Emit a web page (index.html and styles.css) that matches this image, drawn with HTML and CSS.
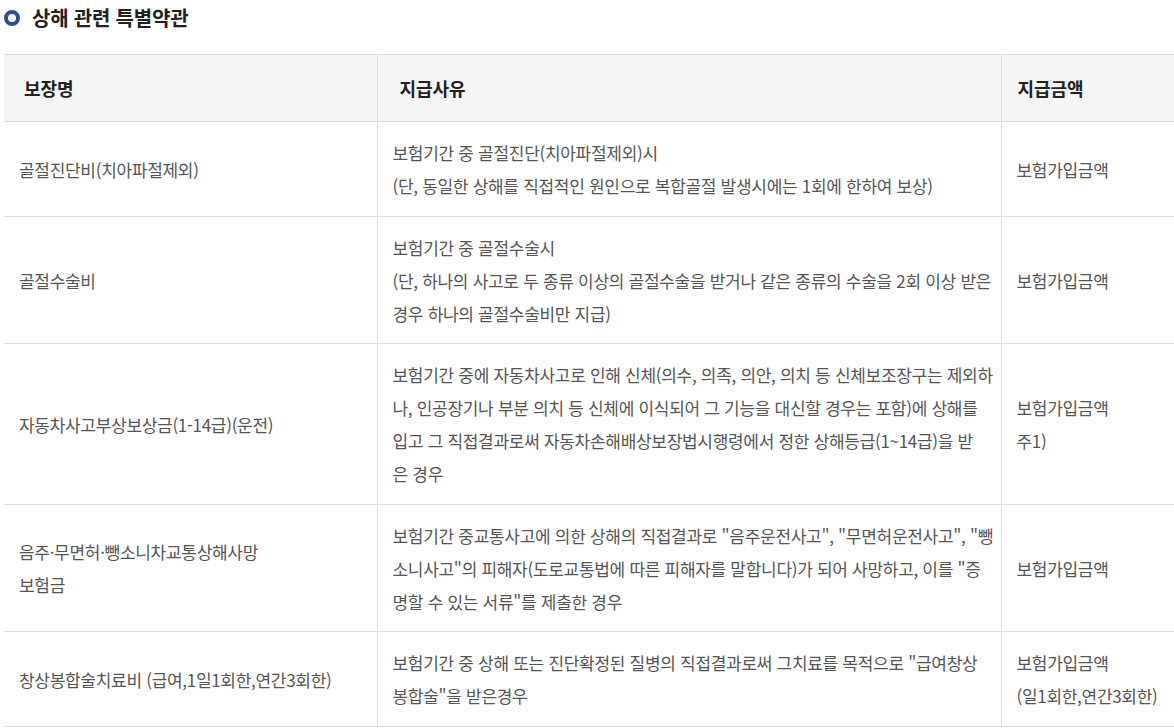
FILE: index.html
```html
<!DOCTYPE html>
<html lang="ko">
<head>
<meta charset="utf-8">
<title>상해 관련 특별약관</title>
<link rel="stylesheet" href="styles.css">
</head>
<body>
<div class="page">
  <h2 class="title"><span class="ring"></span>상해 관련 특별약관</h2>
  <table class="terms">
    <colgroup>
      <col class="c1">
      <col class="c2">
      <col class="c3">
    </colgroup>
    <thead>
      <tr>
        <th class="h1">보장명</th>
        <th class="h2">지급사유</th>
        <th class="h3">지급금액</th>
      </tr>
    </thead>
    <tbody>
      <tr>
        <td>골절진단비(치아파절제외)</td>
        <td>보험기간 중 골절진단(치아파절제외)시<br>(단, 동일한 상해를 직접적인 원인으로 복합골절 발생시에는 1회에 한하여 보상)</td>
        <td>보험가입금액</td>
      </tr>
      <tr>
        <td>골절수술비</td>
        <td>보험기간 중 골절수술시<br>(단, 하나의 사고로 두 종류 이상의 골절수술을 받거나 같은 종류의 수술을 2회 이상 받은<br>경우 하나의 골절수술비만 지급)</td>
        <td>보험가입금액</td>
      </tr>
      <tr>
        <td>자동차사고부상보상금(1-14급)(운전)</td>
        <td>보험기간 중에 자동차사고로 인해 신체(의수, 의족, 의안, 의치 등 신체보조장구는 제외하<br>나, 인공장기나 부분 의치 등 신체에 이식되어 그 기능을 대신할 경우는 포함)에 상해를<br>입고 그 직접결과로써 자동차손해배상보장법시행령에서 정한 상해등급(1~14급)을 받<br>은 경우</td>
        <td>보험가입금액<br>주1)</td>
      </tr>
      <tr>
        <td>음주·무면허·뺑소니차교통상해사망<br>보험금</td>
        <td>보험기간 중교통사고에 의한 상해의 직접결과로 "음주운전사고", "무면허운전사고", "뺑<br>소니사고"의 피해자(도로교통법에 따른 피해자를 말합니다)가 되어 사망하고, 이를 "증<br>명할 수 있는 서류"를 제출한 경우</td>
        <td>보험가입금액</td>
      </tr>
      <tr>
        <td>창상봉합술치료비 (급여,1일1회한,연간3회한)</td>
        <td>보험기간 중 상해 또는 진단확정된 질병의 직접결과로써 그치료를 목적으로 "급여창상<br>봉합술"을 받은경우</td>
        <td>보험가입금액<br>(일1회한,연간3회한)</td>
      </tr>
    </tbody>
  </table>
</div>
</body>
</html>
```
FILE: styles.css
```css
html, body {
  margin: 0;
  padding: 0;
  background: #fff;
}
body {
  font-family: "Noto Sans CJK KR", "Noto Sans", sans-serif;
}
.page {
  padding: 0 0 0 4px;
}
.title {
  display: flex;
  align-items: center;
  gap: 12px;
  margin: 0 0 20px 0;
  height: 34px;
  font-size: 20px;
  font-weight: 700;
  letter-spacing: -0.2px;
  color: #222;
}
.ring {
  display: block;
  flex: 0 0 16px;
  width: 16px;
  height: 16px;
  box-sizing: border-box;
  border: 4.5px solid #2c4b9b;
  border-radius: 50%;
  margin-top: 1px;
}
.terms {
  width: 1170px;
  table-layout: fixed;
  border-collapse: collapse;
  border-top: 1px solid #dcdcdc;
}
.c1 { width: 373px; }
.c2 { width: 624px; }
.c3 { width: 173px; }
.terms th {
  background: #f5f5f5;
  height: 66px;
  padding: 0;
  text-align: left;
  font-size: 18px;
  font-weight: 700;
  letter-spacing: -0.1px;
  color: #222;
  border-bottom: 1px solid #dcdcdc;
}
.terms th + th,
.terms td + td {
  border-left: 1px solid #dcdcdc;
}
.terms .h1 { padding-left: 20px; }
.terms .h2 { padding-left: 22px; }
.terms .h3 { padding-left: 16px; }
.terms td {
  padding: 14px 4px 13.5px 15px;
  font-size: 17px;
  line-height: 33px;
  letter-spacing: -0.3px;
  color: #555;
  vertical-align: middle;
  border-bottom: 1px solid #dcdcdc;
  white-space: nowrap;
}
```
